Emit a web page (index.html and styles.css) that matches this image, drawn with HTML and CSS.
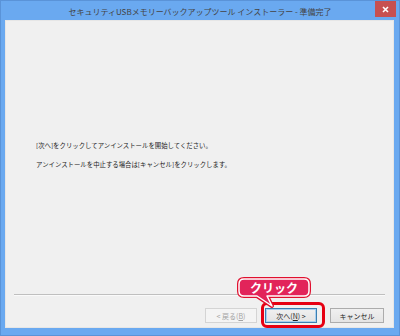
FILE: index.html
```html
<!DOCTYPE html>
<html lang="ja">
<head>
  <meta charset="UTF-8">
  <title>セキュリティUSBメモリーバックアップツール インストーラー</title>
  <link rel="stylesheet" href="styles.css">
</head>
<body>
  <div class="window">
    <div class="titlebar">
      <span class="title">セキュリティUSBメモリーバックアップツール インストーラー - 準備完了</span>
      <button class="close">
        <svg width="7" height="7" viewBox="0 0 7 7"><path d="M1 1 L6 6 M6 1 L1 6" stroke="#fff" stroke-width="1.6"/></svg>
      </button>
    </div>

    <div class="client">
      <div class="message">
        <p>[次へ]をクリックしてアンインストールを開始してください。</p>
        <p>アンインストールを中止する場合は[キャンセル]をクリックします。</p>
      </div>

      <div class="separator"></div>

      <div class="buttons">
        <button class="btn" disabled>&lt; 戻る(<u>B</u>)</button>
        <button class="btn default">次へ(<u>N</u>) &gt;</button>
        <button class="btn cancel">キャンセル</button>
      </div>

      <!-- callout over the next button -->
      <div class="ring"></div>
      <div class="callout">
        <svg width="80" height="40" viewBox="0 0 80 40">
          <path d="M10,4 H70 Q75,4 75,9 V16 Q75,21 70,21 H33 L38,31 L23,21 H10 Q5,21 5,16 V9 Q5,4 10,4 Z" fill="none" stroke="#e0102f" stroke-width="4" stroke-linejoin="round"/>
          <path d="M10,4 H70 Q75,4 75,9 V16 Q75,21 70,21 H33 L38,31 L23,21 H10 Q5,21 5,16 V9 Q5,4 10,4 Z" fill="#e2245a" stroke="#fff" stroke-width="1.5" stroke-linejoin="round"/>
        </svg>
        <span class="callout-text">クリック</span>
      </div>
    </div>
  </div>
</body>
</html>
```

FILE: styles.css
```css
body {
  margin: 0;
  font-family: "Noto Sans CJK JP", "Noto Sans", sans-serif;
}

.window {
  width: 400px;
  height: 336px;
  box-sizing: border-box;
  background-color: #6aa9f0;
  border: 1px solid #5a93d8;
  display: flex;
  flex-direction: column;
}

.titlebar {
  height: 19px;
  position: relative;
  display: flex;
  justify-content: center;
  align-items: center;
}

.title {
  font-size: 8px;
  color: #444;
  margin-top: 1px;
}

.close {
  position: absolute;
  right: 3px;
  top: 0;
  width: 21px;
  height: 16px;
  border: none;
  padding: 0;
  background-color: #c75050;
  display: flex;
  justify-content: center;
  align-items: center;
}

.client {
  position: relative;
  margin: 0 5px 0 4px;
  height: 308px;
  box-sizing: border-box;
  background-color: #f0f0f0;
  border: 1px solid #e6e6e6;
}

.message {
  padding: 120px 0 0 30px;
  height: 273px;
  box-sizing: border-box;
  font-size: 6.4px;
  color: #222;
}

.message p {
  margin: 0 0 9px 0;
  line-height: 10px;
}

.separator {
  margin: 0 8px;
  height: 1px;
  background-color: #bfbfbf;
  border-bottom: 1px solid #fafafa;
}

.buttons {
  display: flex;
  justify-content: flex-end;
  margin-top: 12px;
  padding-right: 9px;
}

.btn {
  width: 52px;
  height: 15px;
  padding: 0;
  margin-left: 8px;
  font-family: "Noto Sans CJK JP", "Noto Sans", sans-serif;
  font-size: 7px;
  color: #222;
  background: linear-gradient(#f0f0f0, #e4e4e4);
  border: 1px solid #acacac;
  border-radius: 0;
}

.btn:disabled {
  color: #a2a2a2;
  background: #f4f4f4;
  border-color: #d4d4d4;
}

.default {
  border-color: #3c7fb1;
  box-shadow: inset 0 0 0 1px #a8d0f0;
}

.cancel {
  margin-left: 13px;
  width: 54px;
}

.ring {
  position: absolute;
  left: 255px;
  top: 281px;
  width: 58px;
  height: 20px;
  border: 3px solid #e60012;
  border-radius: 6px;
}

.callout {
  position: absolute;
  left: 228px;
  top: 254px;
  width: 80px;
  height: 40px;
}

.callout svg {
  display: block;
}

.callout-text {
  position: absolute;
  left: 5px;
  top: 4px;
  width: 70px;
  height: 17px;
  line-height: 17px;
  text-align: center;
  font-size: 12px;
  font-weight: bold;
  color: #fff;
}
```
